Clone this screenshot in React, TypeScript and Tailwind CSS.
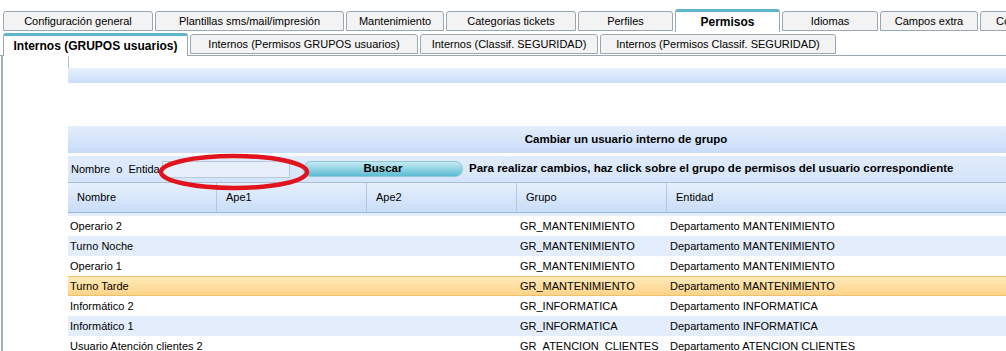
import React from "react";

const topTabs = [
  { label: "Configuración general", w: 150 },
  { label: "Plantillas sms/mail/impresión", w: 189 },
  { label: "Mantenimiento", w: 98 },
  { label: "Categorias tickets", w: 130 },
  { label: "Perfiles", w: 95 },
  { label: "Permisos", w: 105, active: true },
  { label: "Idiomas", w: 96 },
  { label: "Campos extra", w: 98 },
  { label: "Configuración", w: 100 },
];

const subTabs = [
  { label: "Internos (GRUPOS usuarios)", w: 185, active: true },
  { label: "Internos (Permisos GRUPOS usuarios)", w: 228 },
  { label: "Internos (Classif. SEGURIDAD)", w: 178 },
  { label: "Internos (Permisos Classif. SEGURIDAD)", w: 236 },
];

const rows = [
  { nombre: "Técnico de guardia", grupo: "GR_MANTENIMIENTO", entidad: "Departamento MANTENIMIENTO" },
  { nombre: "Operario 2", grupo: "GR_MANTENIMIENTO", entidad: "Departamento MANTENIMIENTO" },
  { nombre: "Turno Noche", grupo: "GR_MANTENIMIENTO", entidad: "Departamento MANTENIMIENTO" },
  { nombre: "Operario 1", grupo: "GR_MANTENIMIENTO", entidad: "Departamento MANTENIMIENTO" },
  { nombre: "Turno Tarde", grupo: "GR_MANTENIMIENTO", entidad: "Departamento MANTENIMIENTO", selected: true },
  { nombre: "Informático 2", grupo: "GR_INFORMATICA", entidad: "Departamento INFORMATICA" },
  { nombre: "Informático 1", grupo: "GR_INFORMATICA", entidad: "Departamento INFORMATICA" },
  { nombre: "Usuario Atención clientes 2", grupo: "GR_ATENCION_CLIENTES", entidad: "Departamento ATENCION CLIENTES" },
];

function Tab({ label, w, active }: { label: string; w: number; active?: boolean }) {
  if (active) {
    return (
      <div
        className="shrink-0 h-[23px] flex items-center justify-center font-bold text-[12px] bg-white border border-b-0 border-[#9ba8b2] border-t-[3px] border-t-[#5eb6cc] rounded-t-[3px]"
        style={{ width: w }}
      >
        {label}
      </div>
    );
  }
  return (
    <div
      className="shrink-0 h-[20px] mb-px flex items-center justify-center bg-[#f3f3f3] border border-[#9ba8b2] rounded-t-[3px]"
      style={{ width: w }}
    >
      {label}
    </div>
  );
}

export default function App() {
  return (
    <div className="w-[1006px] h-[351px] overflow-hidden bg-white text-[11px] text-black font-['Liberation_Sans',Arial,sans-serif]">
      {/* top tabs */}
      <div className="h-[32px] pt-[9px] pl-[3px] flex items-end gap-[2px]">
        {topTabs.map((t) => (
          <Tab key={t.label} {...t} />
        ))}
      </div>
      {/* sub tabs */}
      <div className="h-[24px] pl-[3px] flex items-end gap-[2px] border-b border-[#9ba8b2]">
        {subTabs.map((t) => (
          <div key={t.label} className={t.active ? "-mb-px" : ""}>
            <Tab {...t} />
          </div>
        ))}
      </div>
      {/* content */}
      <div className="flex h-[300px] border-l-2 border-[#a3aeb6] ml-px">
        <div className="w-[65px] shrink-0" />
        <div className="w-[1116px] shrink-0 relative">
          <div className="h-[12px] border-l border-[#c0c0c0] w-px" />
          <div className="h-[15px] bg-gradient-to-b from-[#e8f1fd] to-[#c9ddf9]" />
          <div className="h-[43px]" />
          <div className="h-[27px] flex items-center justify-center font-bold text-[11.5px] bg-gradient-to-b from-[#e4eefc] to-[#c8dcf8]">
            Cambiar un usuario interno de grupo
          </div>
          <div className="h-[3px]" />
          <div className="h-[27px] flex items-center bg-gradient-to-b from-[#e1ecfb] to-[#d4e4f9] border-b border-[#a9bfd9]">
            <span className="pl-[3px] w-[94px] whitespace-pre">Nombre  o  Entidad</span>
            <div className="w-[128px] h-[17px] bg-[#e6eefa] border border-[#b9c9dc]" />
            <button className="ml-[13px] w-[160px] h-[16px] rounded-full font-bold text-[11.5px] bg-gradient-to-b from-[#c4eaf2] to-[#58bcd3] border border-[#8cc7d6] flex items-center justify-center">
              Buscar
            </button>
            <span className="ml-[6px] font-bold text-[11.5px] whitespace-nowrap">
              Para realizar cambios, haz click sobre el grupo de permisos del usuario correspondiente
            </span>
          </div>
          {/* header */}
          <div className="h-[30px] flex bg-gradient-to-b from-[#e6f0fc] to-[#c9ddf8] border-b border-[#9db6d2]">
            {["Nombre", "Ape1", "Ape2", "Grupo", "Entidad"].map((h, i) => (
              <div
                key={h}
                className={`shrink-0 flex items-center pl-[9px] ${i < 4 ? "border-r border-[#b3c7df]" : ""} ${i === 0 ? "w-[149px]" : "w-[150px]"}`}
              >
                {h}
              </div>
            ))}
          </div>
          {/* body, scrolled a little */}
          <div className="h-[140px] overflow-hidden">
            <div className="-mt-[17px]">
              {rows.map((r, i) => (
                <div
                  key={i}
                  className={`h-[20px] flex items-center ${
                    r.selected
                      ? "bg-gradient-to-b from-[#fee9b8] to-[#fdd489] border-y border-[#ecc06c]"
                      : i % 2 === 1
                      ? "bg-white"
                      : "bg-[#e3edfb]"
                  }`}
                >
                  <div className="w-[449px] shrink-0 pl-[2px]">{r.nombre}</div>
                  <div className="w-[150px] shrink-0 pl-[3px]">{r.grupo}</div>
                  <div className="w-[150px] shrink-0 pl-[3px] whitespace-nowrap">{r.entidad}</div>
                </div>
              ))}
            </div>
          </div>
          {/* red annotation */}
          <svg className="absolute left-[91px] top-[97px]" width="152" height="38" viewBox="0 0 152 38">
            <ellipse cx="75" cy="19" rx="73" ry="16" fill="none" stroke="#e1141d" strokeWidth="4.5" />
          </svg>
        </div>
      </div>
    </div>
  );
}
